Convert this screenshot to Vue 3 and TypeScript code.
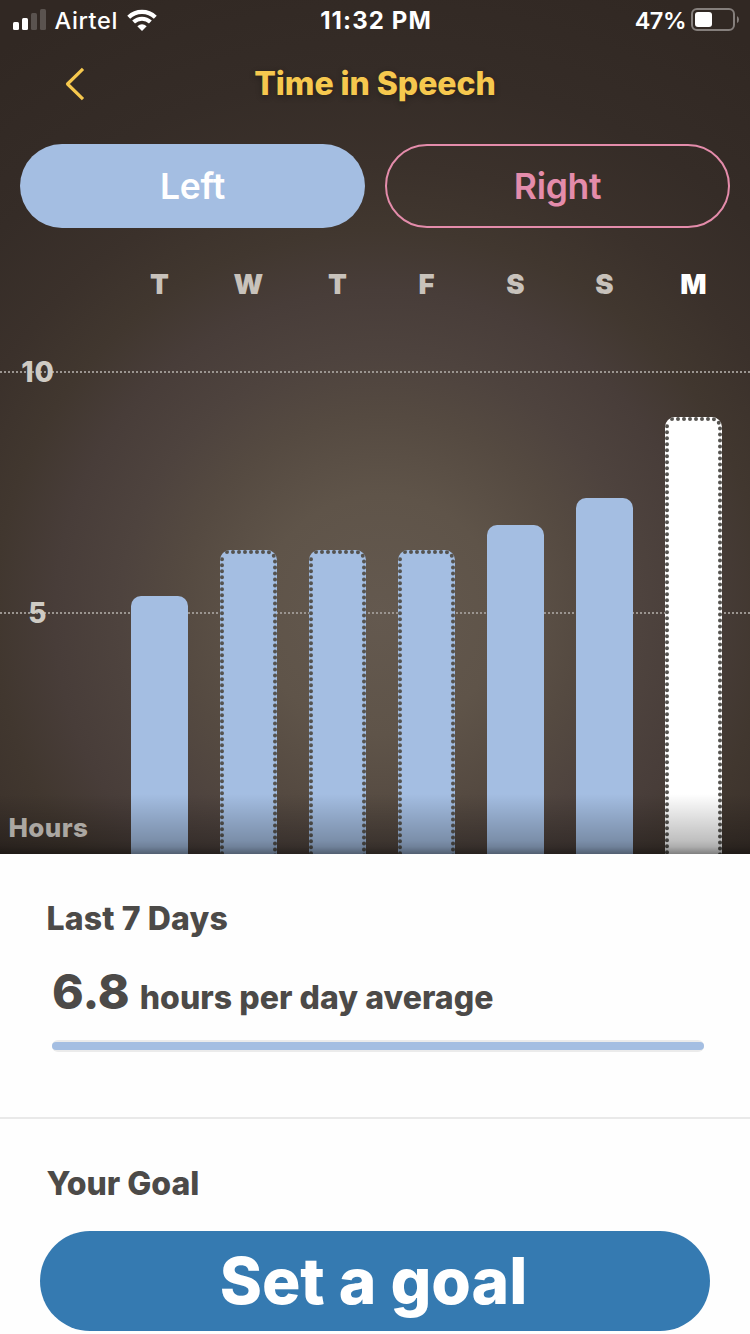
<script setup lang="ts">
interface Day {
  label: string
  height: number
  dotted?: boolean
  today?: boolean
}

const days: Day[] = [
  { label: 'T', height: 258 },
  { label: 'W', height: 304, dotted: true },
  { label: 'T', height: 304, dotted: true },
  { label: 'F', height: 304, dotted: true },
  { label: 'S', height: 329 },
  { label: 'S', height: 356 },
  { label: 'M', height: 437, dotted: true, today: true },
]
</script>

<template>
  <main class="screen">
    <section class="dark">
      <div class="status">
        <div class="carrier">
          <svg class="signal" width="33" height="21" viewBox="0 0 33 21" fill="#fff">
            <rect x="0" y="13" width="6" height="8" rx="1.5" />
            <rect x="9" y="9" width="6" height="12" rx="1.5" />
            <rect x="18" y="4" width="6" height="17" rx="1.5" opacity=".2" />
            <rect x="27" y="0" width="6" height="21" rx="1.5" opacity=".2" />
          </svg>
          <span class="carrier-name">Airtel</span>
          <svg class="wifi" width="30" height="23" viewBox="0 0 30 23" fill="none" stroke="#fff">
            <path d="M1.7 8.2a19.2 19.2 0 0 1 26.6 0" stroke-width="4.2" />
            <path d="M6.6 13.1a12.2 12.2 0 0 1 16.8 0" stroke-width="4.1" />
            <path d="M15 22l-4.7-4.7q4.7-3.9 9.4 0z" fill="#fff" stroke="none" />
          </svg>
        </div>
        <span class="clock">11:32 PM</span>
        <div class="power">
          <span class="percent">47%</span>
          <svg width="48" height="23" viewBox="0 0 48 23">
            <rect x="1" y="1" width="42" height="21" rx="5" fill="none" stroke="#857f7c" stroke-width="2" />
            <rect x="4" y="4" width="17" height="15" rx="3" fill="#fff" />
            <path d="M46 8q2 1 2 3.500t-2 3.500z" fill="#857f7c" />
          </svg>
        </div>
      </div>

      <header class="header">
        <svg class="back" width="20" height="34" viewBox="0 0 20 34" fill="none">
          <path d="M18 1.800L2.500 17L18 32.200" stroke="#f6c84e" stroke-width="3.200" stroke-linejoin="round" />
        </svg>
        <h1 class="title">Time in Speech</h1>
      </header>

      <nav class="tabs">
        <button class="tab tab-left"><span>Left</span></button>
        <button class="tab tab-right"><span>Right</span></button>
      </nav>

      <div class="chart">
        <div class="grid-line line-ten"><span>10</span></div>
        <div class="grid-line line-five"><span>5</span></div>
        <div class="columns">
          <div v-for="(day, i) in days" :key="i" class="column" :class="{ today: day.today }">
            <span class="day">{{ day.label }}</span>
            <div class="bar" :style="{ height: day.height + 'px' }">
              <svg v-if="day.dotted" class="dots" width="57" :height="day.height" fill="none">
                <path :d="`M7 2H47A8 8 0 0 1 55 10V${day.height + 4}`" />
                <path :d="`M2 9.300V${day.height + 4}`" />
              </svg>
            </div>
          </div>
        </div>
        <div class="shade"></div>
        <span class="unit">Hours</span>
      </div>
    </section>

    <section class="summary">
      <h2 class="heading week">Last 7 Days</h2>
      <p class="average"><b>6.8</b><span>hours per day average</span></p>
      <div class="track"><div class="fill"></div></div>
    </section>

    <section class="goal">
      <h2 class="heading yours">Your Goal</h2>
      <button class="set-goal"><span>Set a goal</span></button>
    </section>
  </main>
</template>

<style>
body {
  margin: 0;
  background: #fefefe;
}
</style>

<style scoped>
.screen {
  width: 750px;
  height: 1334px;
  overflow: hidden;
  background: #fefefe;
  font-family: Inter, "Liberation Sans", sans-serif;
  color: #4c4a48;
}
.screen * {
  box-sizing: border-box;
}
svg {
  display: block;
  flex: none;
}
h1, h2, p {
  margin: 0;
}
button {
  border: 0;
  padding: 0;
  font-family: inherit;
}
span {
  white-space: nowrap;
}
.dark {
  height: 854px;
  display: flex;
  flex-direction: column;
  background: radial-gradient(circle at 380px 615px, #64594f 0, #5f5449 120px, #554a41 200px, #4e433e 260px, #483d39 325px, #41372f 385px, #3b312b 450px, #352c27 540px, #312823 680px);
}
.status {
  height: 41px;
  display: grid;
  grid-template-columns: 1fr auto 1fr;
  align-items: center;
  padding: 0 11px 0 13px;
  color: #fff;
  font-size: 23.5px;
  line-height: 28px;
  font-weight: 500;
}
.carrier, .power {
  display: flex;
  align-items: center;
}
.power {
  justify-content: flex-end;
  gap: 5px;
}
.percent {
  font-weight: 600;
  letter-spacing: -0.5px;
}
.power svg, .signal {
  margin-bottom: 2px;
}
.carrier-name {
  margin-left: 8.5px;
  letter-spacing: 0.65px;
}
.wifi {
  margin-left: 9px;
}
.clock {
  font-weight: 700;
  font-size: 24px;
  letter-spacing: 1.1px;
}
.header {
  height: 85px;
  display: grid;
  grid-template-columns: 65px 1fr 65px;
  align-items: center;
}
.back {
  margin: 1px 0 0 65px;
}
.title {
  font-size: 32px;
  font-weight: 800;
  line-height: 39px;
  letter-spacing: -0.05px;
  text-align: center;
  color: #f6c84e;
  text-shadow: 0 2px 6px rgba(0, 0, 0, 0.3);
}
.tabs {
  display: grid;
  grid-template-columns: 1fr 1fr;
  gap: 20px;
  padding: 18px 20px 0;
}
.tab {
  height: 84px;
  border-radius: 42px;
  font-size: 35.5px;
  font-weight: 600;
  letter-spacing: -0.3px;
}
.tab-left {
  background: #a4bee2;
  color: #fff;
}
.tab-right {
  background: transparent;
  border: 2px solid #e48cab;
  color: #e48cab;
}
.chart {
  flex: 1;
  position: relative;
}
.grid-line {
  position: absolute;
  left: 0;
  right: 0;
  height: 2px;
  background: repeating-linear-gradient(90deg, #9b9590 0 2px, transparent 2px 4px);
}
.line-ten {
  top: 143px;
}
.line-five {
  top: 384px;
}
.grid-line span {
  position: absolute;
  left: 0;
  top: -16px;
  width: 76px;
  text-align: center;
  font-size: 28px;
  line-height: 34px;
  font-weight: 800;
  letter-spacing: 1px;
  color: #cfcbc4;
}
.columns {
  position: relative;
  height: 100%;
  display: flex;
  gap: 32px;
  padding: 39px 28px 0 131px;
}
.column {
  flex: 1;
  display: flex;
  flex-direction: column;
  justify-content: space-between;
}
.day {
  text-align: center;
  font-size: 27.5px;
  line-height: 35px;
  font-weight: 900;
  color: #c8c2bb;
}
.bar {
  background: #a4bee2;
  border-radius: 10px 10px 0 0;
  overflow: hidden;
}
.today .day {
  color: #fff;
}
.today .bar {
  background: #fff;
}
.dots path {
  stroke: #55534f;
  stroke-width: 4px;
  stroke-linecap: round;
  stroke-dasharray: 0 6;
}
.shade {
  position: absolute;
  left: 0;
  right: 0;
  bottom: 0;
  height: 60px;
  background: linear-gradient(rgba(0, 0, 0, 0), rgba(0, 0, 0, 0.25) 78%, rgba(0, 0, 0, 0.32) 88%, rgba(0, 0, 0, 0.5));
}
.unit {
  position: absolute;
  left: 8.5px;
  bottom: 10px;
  font-size: 26px;
  line-height: 32px;
  font-weight: 800;
  letter-spacing: 0.4px;
  color: #aba7a2;
}
.summary {
  height: 265px;
  padding: 44px 46px 0 52px;
  border-bottom: 2px solid #e9e9e9;
}
.heading {
  font-size: 32px;
  line-height: 41px;
  font-weight: 800;
}
.week {
  margin-left: -5.5px;
  letter-spacing: 0.15px;
}
.average {
  display: flex;
  align-items: baseline;
  height: 60px;
  margin-top: 23px;
  line-height: 60px;
  font-weight: 800;
}
.average b {
  font-size: 48px;
  font-weight: 800;
}
.average span {
  margin-left: 10px;
  font-size: 32px;
  letter-spacing: 0.05px;
}
.track {
  height: 12px;
  margin-top: 18px;
  padding: 2px 0;
  border-radius: 6px;
  background: #ebebeb;
}
.fill {
  height: 8px;
  border-radius: 4px;
  background: #a4bee2;
}
.goal {
  padding: 44px 40px 0;
}
.yours {
  margin-left: 6.5px;
}
.set-goal {
  display: block;
  width: 100%;
  height: 100px;
  margin-top: 27px;
  border-radius: 50px;
  background: #357ab1;
  color: #fff;
  font-size: 64px;
  line-height: 78px;
  font-weight: 800;
}
.set-goal span {
  margin-right: 3px;
}
</style>
